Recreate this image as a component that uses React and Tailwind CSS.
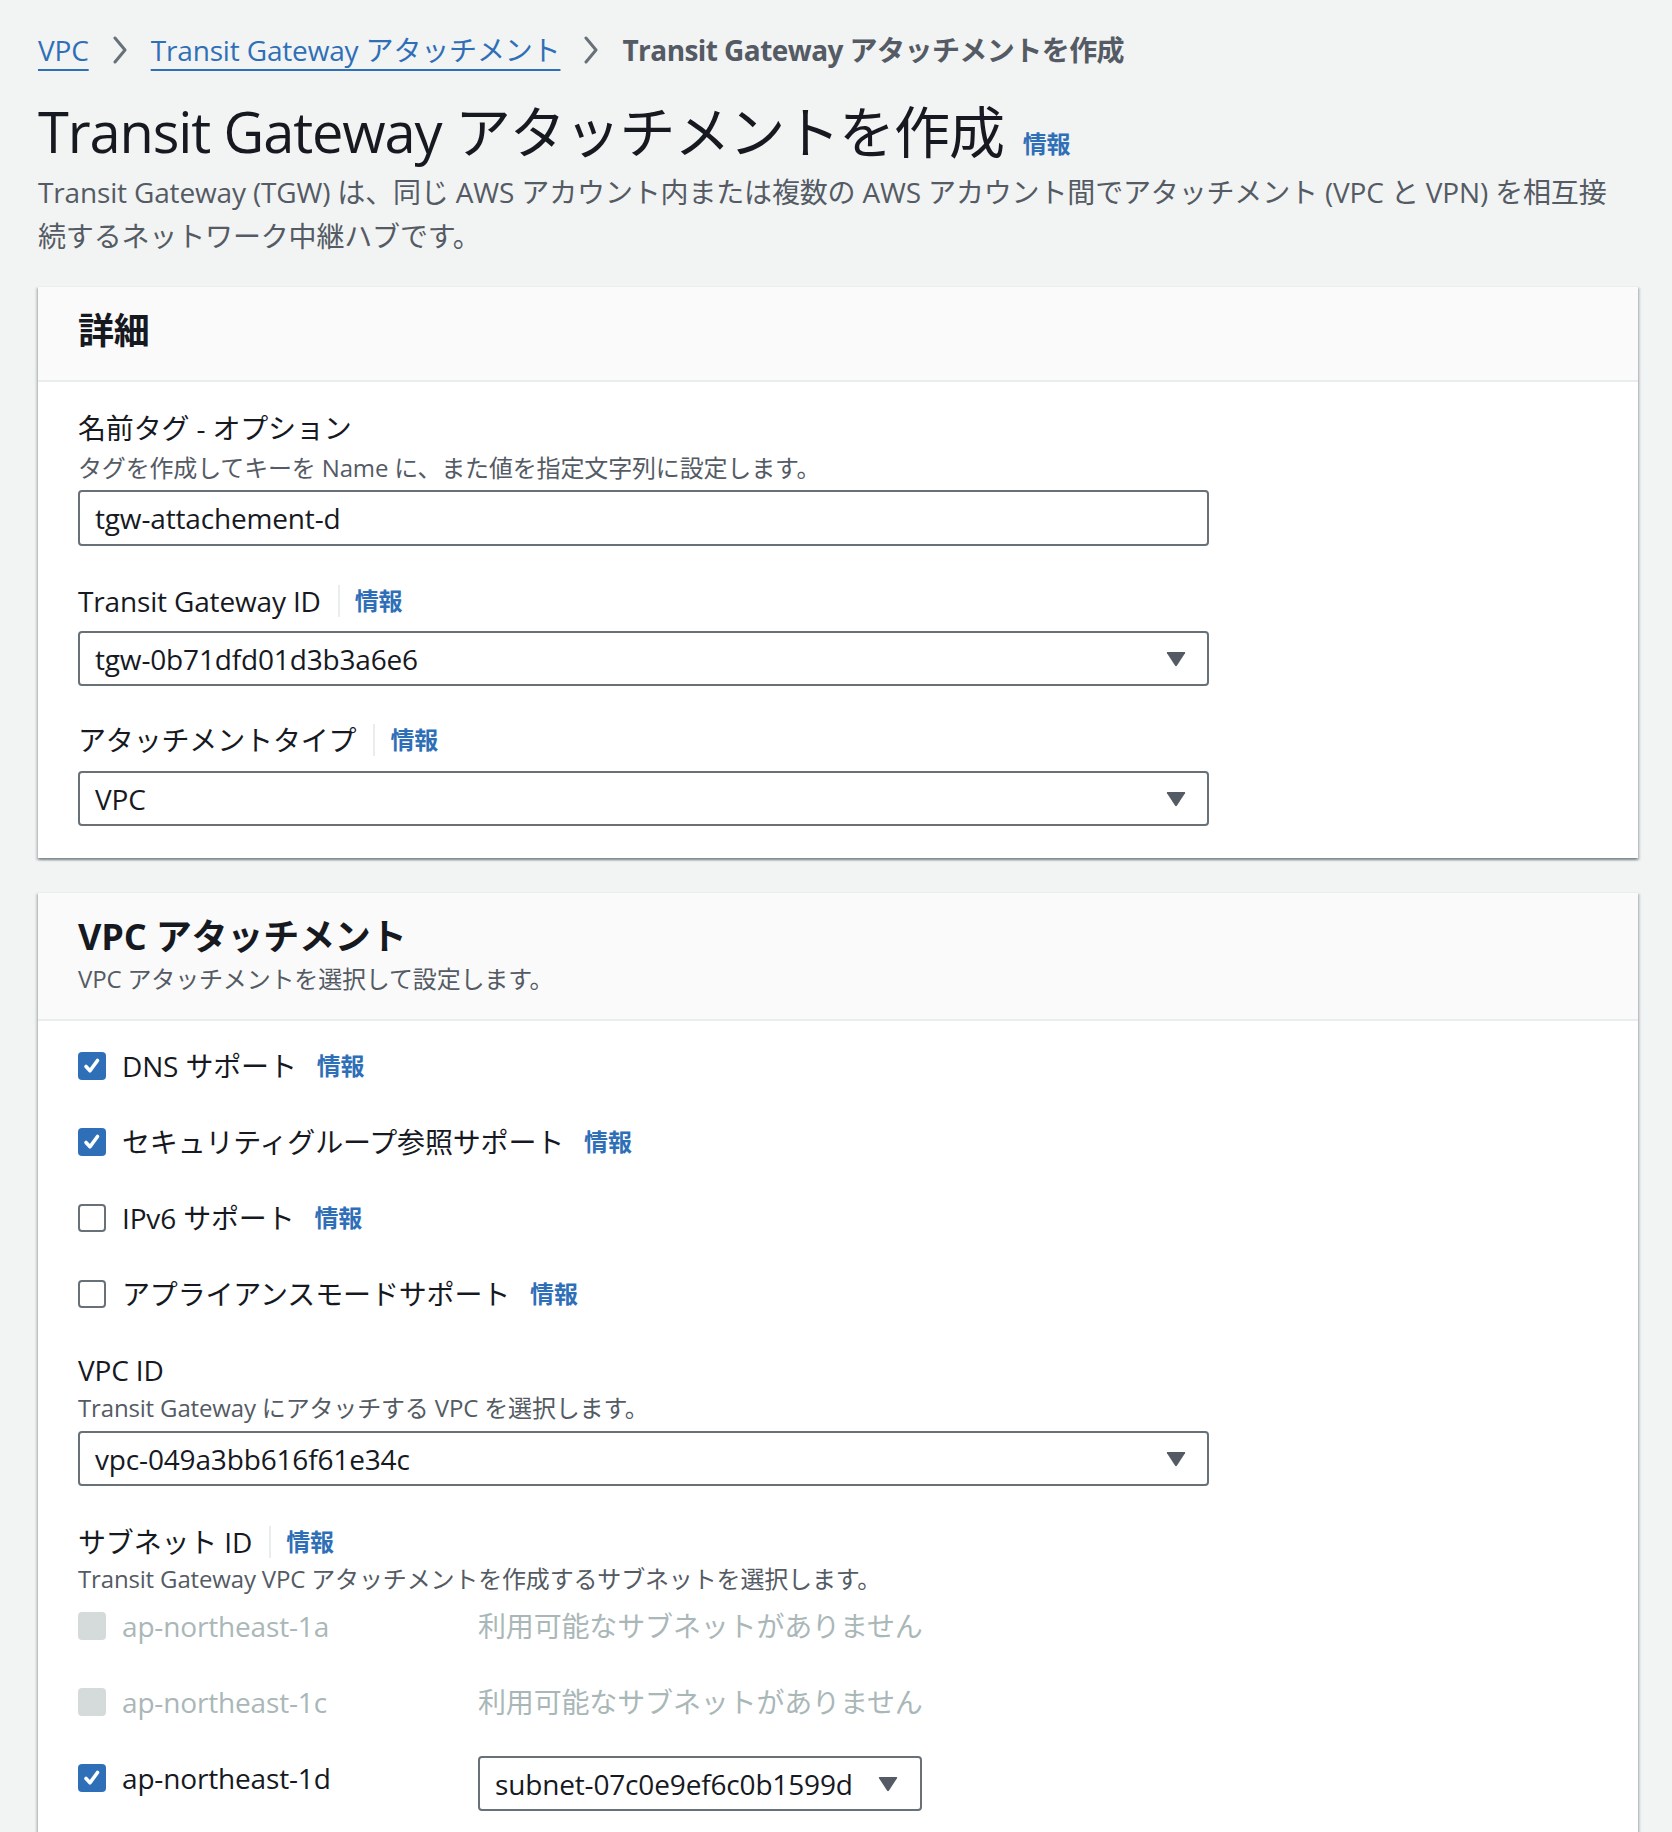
import React from 'react';

const Info = ({ className = '' }) => (
  <span className={`text-[24px] leading-[32px] font-bold text-[#2f6fb7] ${className}`}>情報</span>
);

const Chevron = () => (
  <svg width="16" height="28" viewBox="0 0 16 28" className="mx-[23px] shrink-0">
    <path d="M3 2 L13 14 L3 26" fill="none" stroke="#687078" strokeWidth="3" strokeLinecap="round" strokeLinejoin="round" />
  </svg>
);

const Caret = () => (
  <svg width="20" height="16" viewBox="0 0 20 16" className="shrink-0">
    <path d="M1.5 1 H18.5 Q19.6 1 19 2.2 L11 14.6 Q10 16 9 14.6 L1 2.2 Q0.4 1 1.5 1 Z" fill="#545b64" />
  </svg>
);

const Checkbox = ({ state }) => {
  if (state === 'checked') {
    return (
      <span className="flex h-[28px] w-[28px] shrink-0 items-center justify-center rounded-[4px] bg-[#2f6fb7]">
        <svg width="22" height="22" viewBox="0 0 22 22">
          <path d="M5 11.5 L9 15.8 L16.5 5.5" fill="none" stroke="#ffffff" strokeWidth="3.6" strokeLinecap="round" strokeLinejoin="round" />
        </svg>
      </span>
    );
  }
  if (state === 'disabled') {
    return <span className="block h-[28px] w-[28px] shrink-0 rounded-[4px] bg-[#d5dbdb]" />;
  }
  return <span className="block h-[28px] w-[28px] shrink-0 rounded-[4px] border-2 border-[#687078] bg-white" />;
};

const LabelInfo = ({ children }) => (
  <div className="flex h-[44px] items-center">
    <span className="text-[28px] leading-[44px] text-[#16191f]">{children}</span>
    <span className="ml-[17px] mr-[15px] h-[32px] border-l-2 border-[#eaeded]" />
    <Info />
  </div>
);

const Select = ({ value, className = 'w-[1131px]' }) => (
  <div className={`flex h-[55px] items-center justify-between rounded-[4px] border-2 border-[#687078] bg-white pl-[15px] pr-[21px] ${className}`}>
    <span className="text-[28px] text-[#16191f]">{value}</span>
    <Caret />
  </div>
);

const CheckRow = ({ state, label }) => (
  <div className="flex h-[44px] items-center">
    <Checkbox state={state} />
    <span className="ml-[16px] text-[28px] text-[#16191f]">{label}</span>
    <Info className="ml-[20px]" />
  </div>
);

const SubnetRow = ({ zone }) => (
  <div className="flex h-[44px] items-center">
    <div className="flex w-[400px] items-center">
      <Checkbox state="disabled" />
      <span className="ml-[16px] text-[28px] text-[#aab7b8]">{zone}</span>
    </div>
    <span className="text-[28px] text-[#aab7b8]">利用可能なサブネットがありません</span>
  </div>
);

const cardShadow =
  'bg-white border-t border-[#eaeded] shadow-[0_2px_2px_0_rgba(0,28,36,0.3),2px_2px_2px_0_rgba(0,28,36,0.15),-2px_2px_2px_0_rgba(0,28,36,0.15)]';

export default function App() {
  return (
    <div className="min-h-screen bg-[#f2f3f3] pl-[38px] pr-[34px] pt-[28px] pb-[40px] tracking-[-0.01em] font-['Open_Sans','Noto_Sans_CJK_JP',sans-serif]">
      {/* Breadcrumb */}
      <nav className="flex h-[44px] items-center text-[28px]">
        <span className="text-[#2f6fb7] underline decoration-2 underline-offset-[8px]">VPC</span>
        <Chevron />
        <span className="text-[#2f6fb7] underline decoration-2 underline-offset-[8px]">Transit Gateway アタッチメント</span>
        <Chevron />
        <span className="font-bold tracking-[-0.02em] text-[#545b64]">Transit Gateway アタッチメントを作成</span>
      </nav>

      {/* Header */}
      <div className="mt-[27px] flex items-baseline">
        <h1 className="text-[56px] leading-[64px] font-normal tracking-[-0.02em] text-[#16191f]">Transit Gateway アタッチメントを作成</h1>
        <Info className="ml-[19px]" />
      </div>
      <p className="mt-[7px] text-[28px] leading-[44px] text-[#545b64]">
        <span className="block whitespace-nowrap">Transit Gateway (TGW) は、同じ AWS アカウント内または複数の AWS アカウント間でアタッチメント (VPC と VPN) を相互接</span>
        <span className="block">続するネットワーク中継ハブです。</span>
      </p>

      {/* 詳細 */}
      <section className={`mt-[28px] ${cardShadow}`}>
        <div className="border-b-2 border-[#eaeded] bg-[#fafafa] px-[40px] pt-[20px] pb-[25px]">
          <h2 className="text-[36px] leading-[48px] font-bold text-[#16191f]">詳細</h2>
        </div>
        <div className="px-[40px] pt-[24px] pb-[32px]">
          <div className="text-[28px] leading-[44px] text-[#16191f]">名前タグ - オプション</div>
          <div className="text-[24px] leading-[36px] text-[#545b64]">タグを作成してキーを Name に、また値を指定文字列に設定します。</div>
          <div className="mt-[4px] flex h-[56px] w-[1131px] items-center rounded-[4px] border-2 border-[#687078] bg-white px-[15px] text-[28px] text-[#16191f]">
            tgw-attachement-d
          </div>

          <div className="mt-[33px]">
            <LabelInfo>Transit Gateway ID</LabelInfo>
          </div>
          <div className="mt-[8px]">
            <Select value="tgw-0b71dfd01d3b3a6e6" />
          </div>

          <div className="mt-[32px]">
            <LabelInfo>アタッチメントタイプ</LabelInfo>
          </div>
          <div className="mt-[9px]">
            <Select value="VPC" />
          </div>
        </div>
      </section>

      {/* VPC アタッチメント */}
      <section className={`mt-[34px] ${cardShadow}`}>
        <div className="border-b-2 border-[#eaeded] bg-[#fafafa] px-[40px] pt-[20px] pb-[22px]">
          <h2 className="text-[36px] leading-[48px] font-bold text-[#16191f]">VPC アタッチメント</h2>
          <p className="text-[24px] leading-[36px] text-[#545b64]">VPC アタッチメントを選択して設定します。</p>
        </div>
        <div className="px-[40px] pt-[23px] pb-[40px]">
          <div className="flex flex-col gap-[32px]">
            <CheckRow state="checked" label="DNS サポート" />
            <CheckRow state="checked" label="セキュリティグループ参照サポート" />
            <CheckRow state="unchecked" label="IPv6 サポート" />
            <CheckRow state="unchecked" label="アプライアンスモードサポート" />
          </div>

          <div className="mt-[32px] text-[28px] leading-[44px] text-[#16191f]">VPC ID</div>
          <div className="-mt-[2px] text-[24px] leading-[36px] text-[#545b64]">Transit Gateway にアタッチする VPC を選択します。</div>
          <div className="mt-[5px]">
            <Select value="vpc-049a3bb616f61e34c" />
          </div>

          <div className="mt-[34px]">
            <LabelInfo>サブネット ID</LabelInfo>
          </div>
          <div className="-mt-[3px] text-[24px] leading-[36px] text-[#545b64]">Transit Gateway VPC アタッチメントを作成するサブネットを選択します。</div>

          <div className="mt-[7px] flex flex-col gap-[32px]">
            <SubnetRow zone="ap-northeast-1a" />
            <SubnetRow zone="ap-northeast-1c" />
            <div className="flex items-start">
              <div className="flex h-[44px] w-[400px] items-center">
                <Checkbox state="checked" />
                <span className="ml-[16px] text-[28px] text-[#16191f]">ap-northeast-1d</span>
              </div>
              <div className="flex h-[55px] w-[444px] items-center justify-between rounded-[4px] border-2 border-[#687078] bg-white pl-[15px] pr-[22px]">
                <span className="text-[28px] text-[#16191f]">subnet-07c0e9ef6c0b1599d</span>
                <Caret />
              </div>
            </div>
          </div>
        </div>
      </section>
    </div>
  );
}
